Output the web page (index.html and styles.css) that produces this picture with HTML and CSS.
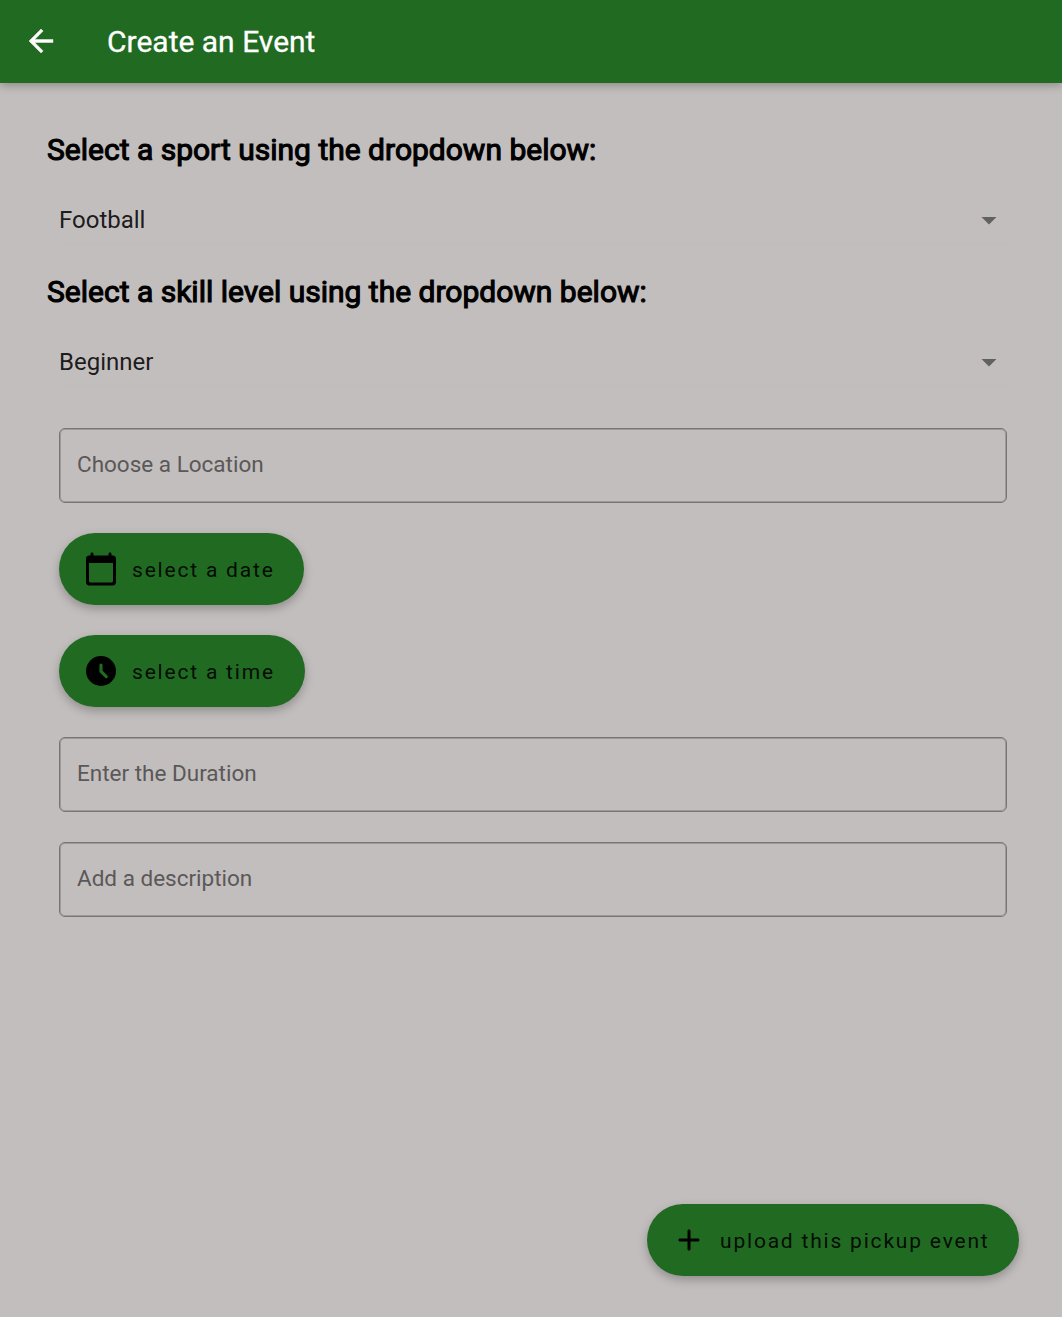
FILE: index.html
```html
<!DOCTYPE html>
<html lang="en">
<head>
<meta charset="utf-8">
<title>Create an Event</title>
<link rel="stylesheet" href="styles.css">
</head>
<body>
<header class="app-bar">
  <svg class="back" viewBox="0 0 24 24"><path d="M20 11H7.830l5.590-5.590L12 4l-8 8 8 8 1.410-1.410L7.830 13H20v-2z"/></svg>
  <h1>Create an Event</h1>
</header>
<main class="form">
  <h2>Select a sport using the dropdown below:</h2>
  <div class="dropdown"><span>Football</span><svg viewBox="0 0 24 24"><path d="M7 10l5 5 5-5z"/></svg></div>
  <h2>Select a skill level using the dropdown below:</h2>
  <div class="dropdown"><span>Beginner</span><svg viewBox="0 0 24 24"><path d="M7 10l5 5 5-5z"/></svg></div>
  <input class="field location" placeholder="Choose a Location">
  <button class="pill date"><svg viewBox="0 0 24 24"><path d="M20 3h-1V2c0-.55-.45-1-1-1s-1 .45-1 1v1H7V2c0-.55-.45-1-1-1s-1 .45-1 1v1H4c-1.100 0-2 .9-2 2v16c0 1.100.9 2 2 2h16c1.100 0 2-.9 2-2V5c0-1.100-.9-2-2-2zm-1 18H5c-.55 0-1-.45-1-1V8h16v12c0 .55-.45 1-1 1z"/></svg><span>select a date</span></button>
  <button class="pill time"><svg viewBox="0 0 24 24"><circle cx="12" cy="12" r="10"/><path class="hands" d="M12 8V12.300L15.500 15.800"/></svg><span>select a time</span></button>
  <input class="field duration" placeholder="Enter the Duration">
  <input class="field description" placeholder="Add a description">
</main>
<footer class="actions">
  <button class="pill upload"><svg viewBox="0 0 24 24"><path d="M18 13h-5v5c0 .55-.45 1-1 1s-1-.45-1-1v-5H6c-.55 0-1-.45-1-1s.45-1 1-1h5V6c0-.55.45-1 1-1s1 .45 1 1v5h5c.55 0 1 .45 1 1s-.45 1-1 1z"/></svg><span>upload this pickup event</span></button>
</footer>
</body>
</html>
```
FILE: styles.css
```css
* { box-sizing: border-box; }
body {
  margin: 0;
  height: 1317px;
  display: flex;
  flex-direction: column;
  background: #c2bebd;
  font-family: Roboto, sans-serif;
  color: #000;
}
.app-bar {
  height: 83px;
  flex: none;
  display: flex;
  align-items: center;
  padding-left: 23px;
  background: #206a21;
  color: #fff;
  box-shadow: 0 3px 8px rgba(0, 0, 0, .25);
}
.back { width: 36px; height: 36px; fill: #fff; stroke: #fff; stroke-width: .3; margin: 0 48px 1px 0; }
h1 { margin: 0; font-size: 30px; font-weight: 400; line-height: 36px; -webkit-text-stroke: .3px #fff; }
.form {
  flex: 1;
  display: flex;
  flex-direction: column;
  align-items: flex-start;
  padding: 47px 55px 0 47px;
}
h2 {
  margin: 0;
  height: 40px;
  line-height: 40px;
  font-size: 30px;
  font-weight: 400;
  white-space: nowrap;
  -webkit-text-stroke: 1.100px #000;
}
.dropdown {
  width: 948px;
  height: 72px;
  margin: 14px 0 16px 12px;
  display: flex;
  align-items: center;
  justify-content: space-between;
  font-size: 24px;
  color: rgba(0, 0, 0, .87);
  background: linear-gradient(#bfbcbb, #bfbcbb) 0 59px / 100% 1px no-repeat;
}
.dropdown svg { width: 36px; height: 36px; fill: #616161; }
.field {
  width: 948px;
  height: 75px;
  margin: 14px 0 30px 12px;
  padding: 0 17px 3px;
  border: 1px solid #777575;
  border-radius: 6px;
  box-shadow: inset 0 0 0 1px rgba(119, 117, 117, .5);
  background: none;
  font: 22.500px Roboto, sans-serif;
  outline: 0;
}
.field::placeholder { color: #5a5858; opacity: 1; }
.pill {
  height: 72px;
  margin: 0 0 30px 12px;
  padding: 0 30px 0 24px;
  display: flex;
  align-items: center;
  gap: 13px;
  border: 0;
  border-radius: 36px;
  background: #206a21;
  color: rgba(0, 0, 0, .9);
  font: 21px Roboto, sans-serif;
  letter-spacing: 1.800px;
  white-space: nowrap;
  box-shadow: 0 4px 10px rgba(0, 0, 0, .25);
}
.pill svg { width: 36px; height: 36px; flex: none; }
.pill span { padding-top: 2px; }
.hands { fill: none; stroke: #206a21; stroke-width: 2.100; stroke-linecap: round; stroke-linejoin: round; }
.date { width: 245px; }
.time { width: 246px; }
.duration { margin-top: 0; }
.description { margin-top: 0; }
.actions { display: flex; justify-content: flex-end; padding: 0 43px 41px 0; }
.upload { width: 372px; margin: 0; }
```
